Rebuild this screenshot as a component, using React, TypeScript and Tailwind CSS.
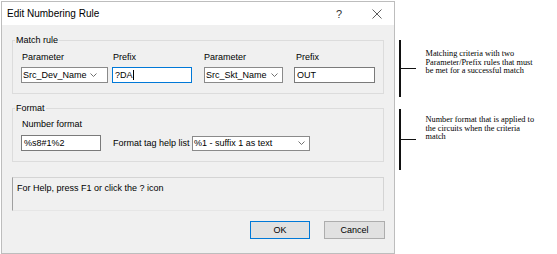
import React from "react";

const Chevron = () => (
    <svg width="7" height="4" viewBox="0 0 7 4" className="shrink-0">
        <polyline points="0.5,0.5 3.5,3.5 6.5,0.5" fill="none" stroke="#606060" strokeWidth="0.9" />
    </svg>
);

interface SelectProps {
    value: string,
    width: string,
    chevronGap: string,
};

const FakeSelect = ({ value, width, chevronGap }: SelectProps) => (
    <div className={`flex items-center justify-between h-[16px] bg-white border border-[#8a8a8a] pl-[1px] ${width} ${chevronGap}`}>
        <span className="whitespace-nowrap overflow-hidden">{value}</span>
        <Chevron />
    </div>
);

const Annotation = ({ lines, height, textTop }: { lines: string[], height: string, textTop: string }) => (
    <div className={`flex flex-row ${height}`}>
        <div className="w-[1.5px] h-full bg-[#111]" />
        <div className="self-center w-[15px] h-[1.5px] bg-[#111]" />
        <div className={`ml-[10px] ${textTop} text-[8.3px] leading-[8.5px] text-black whitespace-nowrap`} style={{ fontFamily: '"Liberation Serif", serif' }}>
            {lines.map((l) => <div key={l}>{l}</div>)}
        </div>
    </div>
);

const App = () => {
    return (
        <div className="w-[557px] h-[254px] bg-white flex flex-row overflow-hidden" style={{ fontFamily: '"Liberation Sans", Arial, sans-serif' }}>

            {/* dialog */}
            <div className="ml-[1px] mt-[1px] w-[394px] h-[253px] border border-[#bdbdbd] bg-[#f0f0f0] flex flex-col text-[9px] leading-[12px] text-black">

                <div className="h-[23px] bg-white flex flex-row items-center shrink-0">
                    <span className="ml-[5px] text-[10px] leading-[12px]">Edit Numbering Rule</span>
                    <span className="ml-auto mr-[30px] text-[11px] text-[#333]">?</span>
                    <svg width="10" height="10" viewBox="0 0 10 10" className="mr-[12px]">
                        <path d="M0.5 0.5 L9.5 9.5 M9.5 0.5 L0.5 9.5" stroke="#333" strokeWidth="0.8" />
                    </svg>
                </div>

                <fieldset className="mx-[10px] mt-[9px] border border-[#dcdcdc] pl-[2px] pb-[10px]">
                    <legend className="px-[1px]">Match rule</legend>
                    <div className="flex flex-row pl-[6px] mt-[5px]">
                        <div className="flex flex-col w-[87px]">
                            <span className="pl-[1px] mb-[4px]">Parameter</span>
                            <FakeSelect value="Src_Dev_Name" width="w-[87px]" chevronGap="pr-[10px]" />
                        </div>
                        <div className="flex flex-col w-[80px] ml-[4px]">
                            <span className="pl-[1px] mb-[4px]">Prefix</span>
                            <div className="h-[16px] bg-white border border-[#0078d7] pl-[2px] flex items-center">
                                <span>?DA</span>
                                <span className="w-[1px] h-[10px] bg-black" />
                            </div>
                        </div>
                        <div className="flex flex-col w-[79px] ml-[12px]">
                            <span className="mb-[4px]">Parameter</span>
                            <FakeSelect value="Src_Skt_Name" width="w-[79px]" chevronGap="pr-[4px]" />
                        </div>
                        <div className="flex flex-col w-[81px] ml-[11px]">
                            <span className="pl-[2px] mb-[4px]">Prefix</span>
                            <div className="h-[16px] bg-white border border-[#7a7a7a] pl-[2px] flex items-center">OUT</div>
                        </div>
                    </div>
                </fieldset>

                <fieldset className="mx-[10px] mt-[8px] border border-[#dcdcdc] pl-[2px] pb-[10px]">
                    <legend className="px-[1px]">Format</legend>
                    <div className="flex flex-row items-end pl-[6px] mt-[4px]">
                        <div className="flex flex-col w-[80px]">
                            <span className="pl-[1px] mb-[5px]">Number format</span>
                            <div className="h-[16px] bg-white border border-[#7a7a7a] pl-[2px] flex items-center">%s8#1%2</div>
                        </div>
                        <div className="flex flex-row items-center h-[16px] ml-[12px]">
                            <span className="w-[79px] whitespace-nowrap">Format tag help list</span>
                            <div className="flex items-center justify-between w-[118px] h-[15px] bg-white border border-[#8a8a8a] pl-[1px] pr-[4px]">
                                <span>%1 - suffix 1 as text</span>
                                <Chevron />
                            </div>
                        </div>
                    </div>
                </fieldset>

                <div className="mx-[10px] mt-[15px] h-[34px] border border-[#d4d4d4] border-l-[#a0a0a0] border-b-[#e6e6e6] pl-[4px] pt-[4px]">
                    For Help, press F1 or click the ? icon
                </div>

                <div className="flex flex-row justify-end mx-[9px] mt-[10px] gap-[14px]">
                    <button className="w-[60px] h-[18px] bg-[#e1e1e1] border border-[#0078d7] text-[9px]">OK</button>
                    <button className="w-[61px] h-[18px] bg-[#e1e1e1] border border-[#adadad] text-[9px]">Cancel</button>
                </div>
            </div>

            {/* annotations */}
            <div className="ml-[4px] mt-[40px] flex flex-col gap-[12px]">
                <Annotation
                    height="h-[57px]"
                    textTop="mt-[10px]"
                    lines={["Matching criteria with two", "Parameter/Prefix rules that must", "be met for a successful match"]}
                />
                <Annotation
                    height="h-[61px]"
                    textTop="mt-[7px]"
                    lines={["Number format that is applied to", "the circuits when the criteria", "match"]}
                />
            </div>
        </div>
    )
};

export default App;
